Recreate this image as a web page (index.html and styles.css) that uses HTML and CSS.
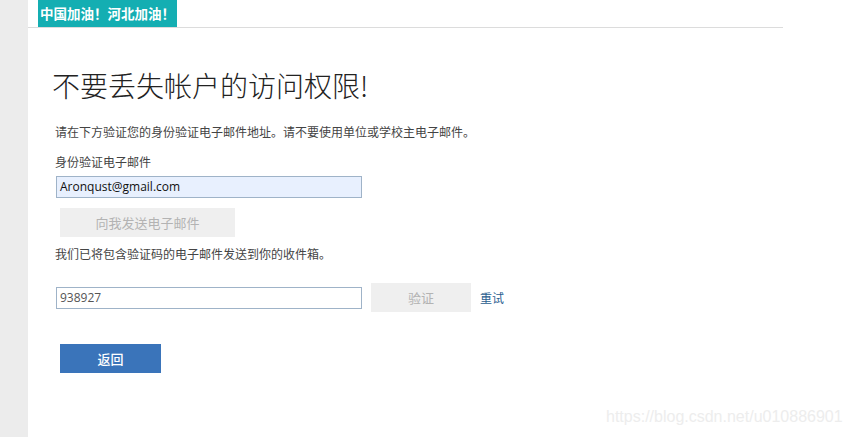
FILE: index.html
```html
<!DOCTYPE html>
<html lang="zh-CN">
<head>
<meta charset="utf-8">
<title>不要丢失帐户的访问权限!</title>
<link rel="stylesheet" href="styles.css">
</head>
<body>
<div class="page">
  <aside class="strip"></aside>
  <main class="main">
    <header class="header">
      <div class="banner">中国加油！河北加油！</div>
    </header>
    <section class="content">
      <h1 class="title">不要丢失帐户的访问权限!</h1>
      <p class="intro">请在下方验证您的身份验证电子邮件地址。请不要使用单位或学校主电子邮件。</p>
      <label class="label">身份验证电子邮件</label>
      <div class="field email">Aronqust@gmail.com</div>
      <button class="btn disabled send">向我发送电子邮件</button>
      <p class="sent">我们已将包含验证码的电子邮件发送到你的收件箱。</p>
      <div class="code-row">
        <div class="field code">938927</div>
        <button class="btn disabled verify">验证</button>
        <a class="retry">重试</a>
      </div>
      <button class="btn primary back">返回</button>
    </section>
  </main>
</div>
<div class="watermark">https://blog.csdn.net/u010886901</div>
</body>
</html>
```
FILE: styles.css
```css
html, body {
  margin: 0;
  padding: 0;
  background: #fff;
}
body {
  font-family: "Noto Sans CJK SC", "Noto Sans", sans-serif;
  color: #333;
  width: 847px;
  height: 437px;
  overflow: hidden;
  position: relative;
}
.page {
  display: flex;
  height: 437px;
}
.strip {
  width: 28px;
  flex: none;
  background: #ececec;
}
.main {
  width: 755px;
  flex: none;
}
.header {
  height: 27px;
  border-bottom: 1px solid #dcdcdc;
  padding-left: 10px;
}
.banner {
  display: inline-block;
  height: 27px;
  line-height: 26px;
  padding: 0 2px;
  background: #14aeb2;
  color: #fff;
  font-size: 13.5px;
  font-weight: 700;
}
.content {
  padding-left: 27px;
  display: flex;
  flex-direction: column;
  align-items: flex-start;
}
.title {
  margin: 40px 0 0 -3px;
  font-size: 28px;
  line-height: 34px;
  font-weight: 300;
  color: #222;
}
.intro {
  margin: 21px 0 0 0;
  font-size: 12px;
  line-height: 18px;
  color: #444;
}
.label {
  margin-top: 12px;
  font-size: 12px;
  line-height: 18px;
  color: #444;
}
.field {
  box-sizing: border-box;
  width: 306px;
  height: 22px;
  border: 1px solid #9fb3c8;
  padding-left: 3px;
  font-family: "Open Sans", "Noto Sans", sans-serif;
  font-size: 12px;
  line-height: 20px;
  margin-left: 1px;
}
.email {
  margin-top: 5px;
  background: #e8f0fe;
  color: #111;
}
.btn {
  border: none;
  font-family: "Noto Sans CJK SC", "Noto Sans", sans-serif;
  font-size: 13px;
  padding: 0;
  margin: 0;
}
.disabled {
  background: #efefef;
  color: #b3b3b3;
}
.send {
  margin: 10px 0 0 5px;
  width: 175px;
  height: 29px;
}
.sent {
  margin: 8px 0 0 0;
  font-size: 12px;
  line-height: 18px;
  color: #444;
}
.code-row {
  margin-top: 20px;
  display: flex;
  align-items: center;
}
.code {
  color: #555;
  background: #fff;
}
.verify {
  margin-left: 9px;
  width: 100px;
  height: 29px;
}
.retry {
  margin-left: 9px;
  font-size: 12px;
  color: #2a5d8f;
}
.primary {
  background: #3a74ba;
  color: #fff;
  font-weight: 500;
}
.back {
  margin: 32px 0 0 5px;
  width: 101px;
  height: 29px;
}
.watermark {
  position: absolute;
  left: 606px;
  top: 407px;
  font-family: "Liberation Sans", Arial, sans-serif;
  font-size: 16px;
  line-height: 20px;
  color: #ededed;
}
```
